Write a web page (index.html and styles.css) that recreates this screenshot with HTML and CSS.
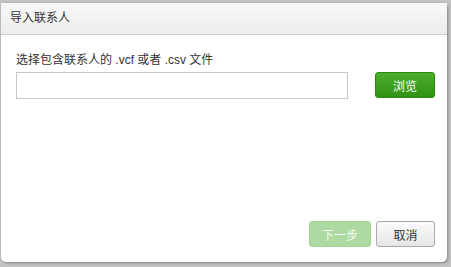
FILE: index.html
```html
<!DOCTYPE html>
<html lang="zh-CN">

<head>
    <meta charset="UTF-8">
    <meta name="viewport" content="width=device-width, initial-scale=1.0">
    <title>导入联系人</title>
    <link rel="stylesheet" href="styles.css">
</head>

<body>
    <div class="dialog">
        <div class="dialog-header">导入联系人</div>
        <div class="dialog-body">
            <label for="fileInput">选择包含联系人的 .vcf 或者 .csv 文件</label>
            <div class="file-row">
                <input type="text" id="fileInput" readonly>
                <button class="btn btn-green">浏览</button>
            </div>
        </div>
        <div class="dialog-footer">
            <button class="btn btn-green disabled">下一步</button>
            <button class="btn btn-gray">取消</button>
        </div>
    </div>
</body>

</html>
```

FILE: styles.css
```css
body {
    margin: 0;
    height: 267px;
    background: #c4c4c4;
    font-family: Arial, "Liberation Sans", "Noto Sans CJK SC", sans-serif;
    font-size: 12px;
    color: #333;
    overflow: hidden;
}

.dialog {
    width: 446px;
    height: 259px;
    margin: 3px 0 0 1px;
    background: #fff;
    border-radius: 0 5px 5px 5px;
    box-shadow: 1px 1px 3px rgba(0, 0, 0, 0.35);
    display: flex;
    flex-direction: column;
}

.dialog-header {
    height: 31px;
    line-height: 30px;
    padding-left: 9px;
    background: linear-gradient(#f8f8f8, #ededed);
    border-bottom: 1px solid #cfcfcf;
    color: #333;
}

.dialog-body {
    padding: 17px 12px 0 15px;
    flex: 1;
}

label {
    display: block;
    line-height: 16px;
    margin-bottom: 4px;
}

.file-row {
    display: flex;
    justify-content: space-between;
}

input[type="text"] {
    width: 332px;
    height: 27px;
    box-sizing: border-box;
    border: 1px solid #c8c8c8;
    margin: 0;
    padding: 0 6px;
}

.btn {
    height: 26px;
    box-sizing: border-box;
    border-radius: 3px;
    font-family: inherit;
    font-size: 12px;
    padding: 0;
    cursor: pointer;
}

.btn-green {
    width: 60px;
    color: #fff;
    background: linear-gradient(#4cae2d, #2f9213);
    border: 1px solid #2b8a12;
}

.btn-green.disabled {
    width: 62px;
    background: #acdaa0;
    border-color: #a4d497;
    color: #f4fbf2;
}

.btn-gray {
    width: 59px;
    color: #333;
    background: linear-gradient(#fbfbfb, #e6e6e6);
    border: 1px solid #a9a9a9;
}

.dialog-footer {
    display: flex;
    justify-content: flex-end;
    gap: 5px;
    padding: 0 12px 15px 0;
}
```
